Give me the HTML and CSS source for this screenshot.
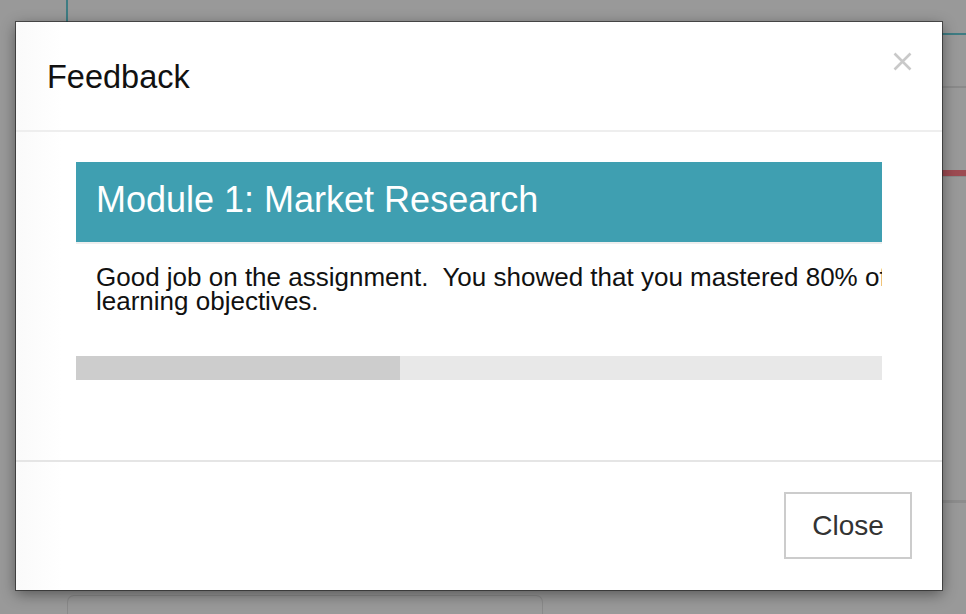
FILE: index.html
```html
<!DOCTYPE html>
<html lang="en">
<head>
<meta charset="utf-8">
<title>Feedback</title>
<link rel="stylesheet" href="styles.css">
</head>
<body>
<div class="backdrop">
  <div class="bg-line bg-vline"></div>
  <div class="bg-line bg-teal"></div>
  <div class="bg-line bg-gray1"></div>
  <div class="bg-line bg-red"></div>
  <div class="bg-line bg-gray2"></div>
  <div class="bg-card"></div>
</div>
<div class="modal">
  <div class="modal-header">
    <h1 class="modal-title">Feedback</h1>
    <button class="modal-x" aria-label="Close">
      <svg width="19" height="19" viewBox="0 0 19 19"><path d="M1.5 1.5 L17.5 17.5 M17.5 1.5 L1.5 17.5" stroke="#c9c9c9" stroke-width="2.6" fill="none"/></svg>
    </button>
  </div>
  <div class="modal-body">
    <div class="clip">
      <div class="inner">
        <div class="module-bar">Module 1: Market Research</div>
        <p class="feedback-text">Good job on the assignment.&nbsp; You showed that you mastered 80% of the learning objectives.</p>
        <div class="progress"><div class="progress-fill" style="width: 324px"></div></div>
      </div>
    </div>
  </div>
  <div class="modal-footer">
    <button class="btn-close">Close</button>
  </div>
</div>
</body>
</html>
```
FILE: styles.css
```css
html, body {
  margin: 0;
  padding: 0;
}
body {
  width: 966px;
  height: 614px;
  overflow: hidden;
  background: #999999;
  font-family: "Liberation Sans", Arial, Helvetica, sans-serif;
  position: relative;
}
.backdrop {
  position: absolute;
  left: 0;
  top: 0;
  width: 966px;
  height: 614px;
  overflow: hidden;
}
.bg-line {
  position: absolute;
}
.bg-vline {
  left: 66px;
  top: 0;
  width: 2px;
  height: 22px;
  background: #3e7c83;
}
.bg-teal {
  left: 942px;
  top: 33px;
  width: 24px;
  height: 2px;
  background: #3e7c83;
}
.bg-gray1 {
  left: 942px;
  top: 86px;
  width: 24px;
  height: 2px;
  background: #8a8a8a;
}
.bg-red {
  left: 942px;
  top: 170px;
  width: 24px;
  height: 6px;
  background: #9d4b52;
  border-bottom: 1px solid #8a8a8a;
}
.bg-gray2 {
  left: 942px;
  top: 500px;
  width: 24px;
  height: 3px;
  background: #8c8c8c;
}
.bg-card {
  position: absolute;
  left: 67px;
  top: 595px;
  width: 476px;
  height: 19px;
  border: 1px solid #8a8a8a;
  border-bottom: 0;
  border-radius: 7px 7px 0 0;
  box-sizing: border-box;
}
.modal {
  position: absolute;
  left: 16px;
  top: 22px;
  width: 926px;
  height: 568px;
  background: linear-gradient(to right, #fafafa 0px, #ffffff 45px);
  box-shadow: 0 0 0 1px rgba(40, 40, 40, 0.7), 0 4px 14px rgba(0, 0, 0, 0.45);
  display: flex;
  flex-direction: column;
}
.modal-header {
  height: 108px;
  border-bottom: 2px solid #eeeeee;
  display: flex;
  justify-content: space-between;
  align-items: flex-start;
  padding: 0 30px 0 31px;
}
.modal-title {
  margin: 37px 0 0 0;
  font-size: 32.5px;
  line-height: 36px;
  font-weight: normal;
  color: #111111;
}
.modal-x {
  margin-top: 30px;
  padding: 0;
  border: 0;
  background: none;
  width: 19px;
  height: 19px;
  display: block;
  filter: blur(0.4px);
}
.modal-x svg {
  display: block;
}
.modal-body {
  height: 328px;
  padding: 30px 60px 0 60px;
  box-sizing: border-box;
}
.clip {
  width: 806px;
  overflow: hidden;
}
.inner {
  width: 960px;
}
.module-bar {
  box-sizing: border-box;
  height: 82px;
  padding: 18px 20px 22px 20px;
  background: #3f9fb1;
  color: #ffffff;
  font-size: 36px;
  line-height: 40px;
  border-bottom: 2px solid #eeeeee;
}
.feedback-text {
  margin: 21px 0 0 0;
  padding: 0 20px;
  font-size: 26px;
  line-height: 24px;
  color: #111111;
}
.progress {
  margin-top: 43px;
  height: 24px;
  width: 806px;
  background: #e8e8e8;
}
.progress-fill {
  height: 100%;
  background: #cdcdcd;
}
.modal-footer {
  flex: 1;
  border-top: 2px solid #e5e5e5;
  display: flex;
  justify-content: flex-end;
  align-items: flex-start;
  padding: 30px 30px 0 0;
}
.btn-close {
  width: 128px;
  height: 67px;
  box-sizing: border-box;
  border: 2px solid #cccccc;
  background: #ffffff;
  color: #333333;
  font-family: "Liberation Sans", Arial, sans-serif;
  font-size: 28px;
  padding: 0;
}
```
